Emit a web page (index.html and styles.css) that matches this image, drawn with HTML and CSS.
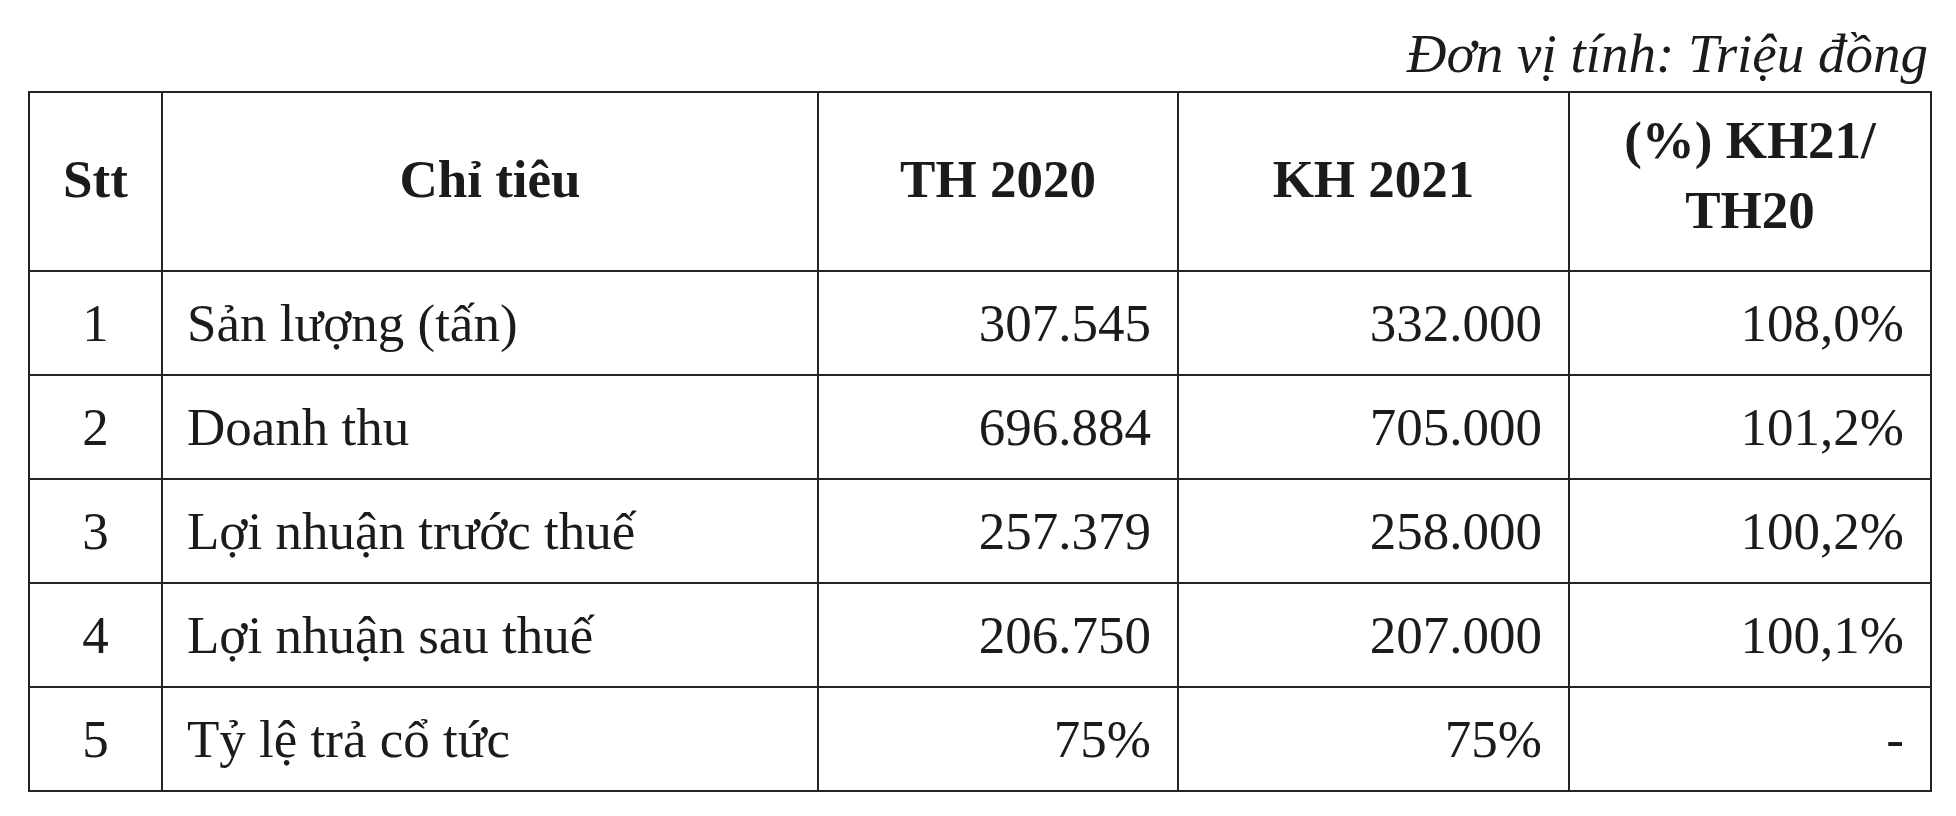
FILE: index.html
```html
<!DOCTYPE html>
<html lang="vi">
<head>
<meta charset="utf-8">
<title>Kế hoạch 2021</title>
<link rel="stylesheet" href="styles.css">
</head>
<body>
<div class="page">
  <p class="unit">Đơn vị tính: Triệu đồng</p>
  <table class="plan">
    <colgroup>
      <col class="c-stt">
      <col class="c-name">
      <col class="c-th">
      <col class="c-kh">
      <col class="c-pct">
    </colgroup>
    <thead>
      <tr class="head-row">
        <th>Stt</th>
        <th>Chỉ tiêu</th>
        <th>TH 2020</th>
        <th>KH 2021</th>
        <th class="two-line">(%) KH21/<br>TH20</th>
      </tr>
    </thead>
    <tbody>
      <tr>
        <td class="stt">1</td>
        <td class="name">Sản lượng (tấn)</td>
        <td class="num">307.545</td>
        <td class="num">332.000</td>
        <td class="num">108,0%</td>
      </tr>
      <tr>
        <td class="stt">2</td>
        <td class="name">Doanh thu</td>
        <td class="num">696.884</td>
        <td class="num">705.000</td>
        <td class="num">101,2%</td>
      </tr>
      <tr>
        <td class="stt">3</td>
        <td class="name">Lợi nhuận trước thuế</td>
        <td class="num">257.379</td>
        <td class="num">258.000</td>
        <td class="num">100,2%</td>
      </tr>
      <tr>
        <td class="stt">4</td>
        <td class="name">Lợi nhuận sau thuế</td>
        <td class="num">206.750</td>
        <td class="num">207.000</td>
        <td class="num">100,1%</td>
      </tr>
      <tr>
        <td class="stt">5</td>
        <td class="name">Tỷ lệ trả cổ tức</td>
        <td class="num">75%</td>
        <td class="num">75%</td>
        <td class="num">-</td>
      </tr>
    </tbody>
  </table>
</div>
</body>
</html>
```

FILE: styles.css
```css
html, body {
  margin: 0;
  padding: 0;
  background: #ffffff;
}

body {
  font-family: "Liberation Serif", "Times New Roman", serif;
  color: #1a1b1b;
}

.page {
  width: 1902px;
  padding: 24px 0 0 28px;
}

.unit {
  margin: 0 0 7px 0;
  text-align: right;
  font-style: italic;
  font-size: 55px;
  line-height: 60px;
  padding-right: 2px;
}

.plan {
  width: 1902px;
  border-collapse: collapse;
  table-layout: fixed;
  font-size: 53px;
}

.c-stt { width: 133px; }
.c-name { width: 656px; }
.c-th { width: 360px; }
.c-kh { width: 391px; }
.c-pct { width: 362px; }

.plan th,
.plan td {
  border: 2px solid #222323;
  padding: 0;
  vertical-align: middle;
  line-height: 60px;
}

.plan th {
  font-weight: bold;
  text-align: center;
  padding-bottom: 6px;
}

.head-row {
  height: 179px;
}

.plan th.two-line {
  line-height: 70px;
  padding-bottom: 14px;
}

.plan tbody tr {
  height: 104px;
}

.plan td.stt {
  text-align: center;
}

.plan td.name {
  text-align: left;
  padding-left: 24px;
}

.plan td.num {
  text-align: right;
  padding-right: 26px;
}
```
